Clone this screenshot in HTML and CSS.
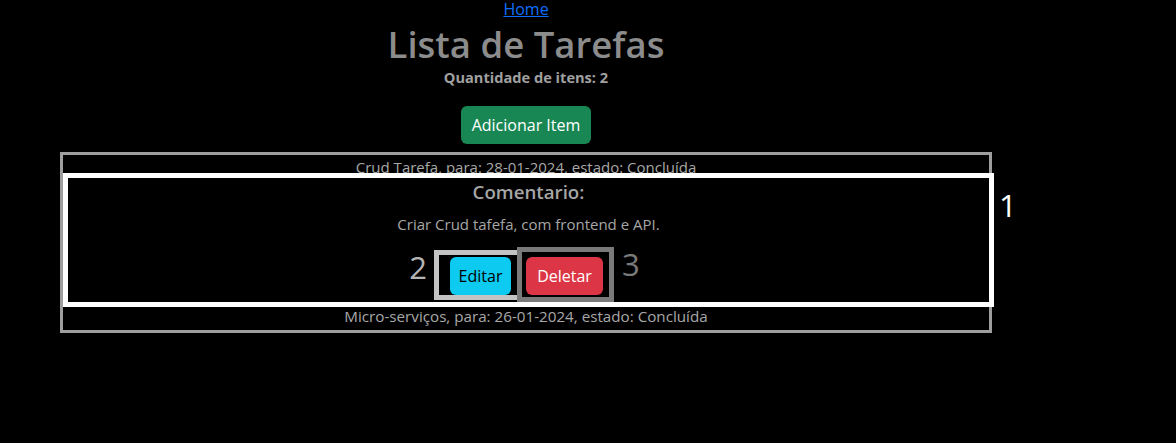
FILE: index.html
```html
<!DOCTYPE html>
<html lang="pt-BR">
<head>
<meta charset="utf-8">
<title>Lista de Tarefas</title>
<link rel="stylesheet" href="styles.css">
</head>
<body>
<div class="page">
  <div class="nav"><a class="home" href="#">Home</a></div>
  <h1 class="title">Lista de Tarefas</h1>
  <p class="count">Quantidade de itens: 2</p>
  <button class="btn btn-add" type="button">Adicionar Item</button>
  <div class="list">
    <div class="row row-first">Crud Tarefa, para: 28-01-2024, estado: Concluída</div>
    <div class="detail">
      <h5 class="detail-title">Comentario:</h5>
      <p class="detail-text">Criar Crud tafefa, com frontend e API.</p>
      <div class="actions">
        <span class="mark mark-2">2</span>
        <span class="frame frame-2"><button class="btn btn-edit" type="button">Editar</button></span>
        <span class="frame frame-3"><button class="btn btn-delete" type="button">Deletar</button></span>
        <span class="mark mark-3">3</span>
      </div>
      <span class="mark mark-1">1</span>
    </div>
    <div class="row row-last">Micro-serviços, para: 26-01-2024, estado: Concluída</div>
  </div>
</div>
</body>
</html>
```
FILE: styles.css
```css
html, body {
  margin: 0;
  padding: 0;
  background: #000;
}

body {
  font-family: "Open Sans", "Noto Sans", sans-serif;
  color: #a6a6a6;
  font-size: 16px;
}

.page {
  margin-left: 60px;
  width: 932px;
  text-align: center;
}

.nav {
  height: 20px;
  line-height: 18px;
}

.home {
  color: #0d6efd;
  text-decoration: underline;
  font-size: 16px;
}

.title {
  margin: 0;
  font-size: 36.5px;
  line-height: 48px;
  font-weight: 600;
  color: #8c8c8c;
}

.count {
  margin: 0;
  font-size: 14.6px;
  line-height: 18px;
  font-weight: 700;
  color: #a0a0a0;
}

.btn {
  font-family: inherit;
  font-size: 16px;
  line-height: 24px;
  height: 38px;
  padding: 6px 12px;
  border: 0;
  border-radius: 6px;
  cursor: pointer;
}

.btn-add {
  margin-top: 20px;
  padding: 6px 10.5px;
  background: #198754;
  color: #fff;
}

.list {
  margin-top: 8px;
  border: 3px solid #9e9e9e;
}

.row {
  color: #a8a8a8;
}

.row-first {
  height: 18px;
  font-size: 15px;
  line-height: 24px;
  overflow: hidden;
}

.row-last {
  height: 23px;
  font-size: 15.2px;
  line-height: 19px;
}

.detail {
  position: relative;
  margin-right: -5px;
  height: 122px;
  border: 5px solid #fff;
  padding-top: 2px;
  box-sizing: content-box;
}

.detail-title {
  margin: 0;
  font-size: 18.7px;
  line-height: 24px;
  font-weight: 600;
  color: #a6a6a6;
}

.detail-text {
  margin: 8px 0 0;
  font-size: 15px;
  line-height: 24px;
  color: #a6a6a6;
}

.actions {
  margin-top: 11px;
  display: flex;
  justify-content: center;
  align-items: flex-start;
  height: 53px;
}

.mark {
  font-size: 31px;
  line-height: 32px;
}

.mark-2 {
  width: 24px;
  margin-top: 4px;
  margin-right: 7px;
  text-align: right;
  color: #b4b4b4;
}

.mark-3 {
  width: 24px;
  margin-top: 1px;
  margin-left: 8px;
  margin-right: 8px;
  text-align: left;
  color: #7a7a7a;
}

.mark-1 {
  position: absolute;
  left: calc(100% + 10px);
  top: 11px;
  color: #fff;
}

.frame {
  display: block;
  box-sizing: border-box;
}

.frame-2 {
  margin-top: 3px;
  height: 50px;
  border: 5px solid #c3c3c3;
  padding: 2px 6px 0 11px;
}

.frame-3 {
  position: relative;
  margin-left: -5px;
  height: 55px;
  border: 5px solid #7a7a7a;
  padding: 5px 6px 2px 4px;
}

.btn-edit {
  display: block;
  width: 61px;
  padding: 6px 0;
  background: #0dcaf0;
  color: #000;
}

.btn-delete {
  display: block;
  width: 77px;
  padding: 6px 0;
  background: #dc3545;
  color: #fff;
}
```
